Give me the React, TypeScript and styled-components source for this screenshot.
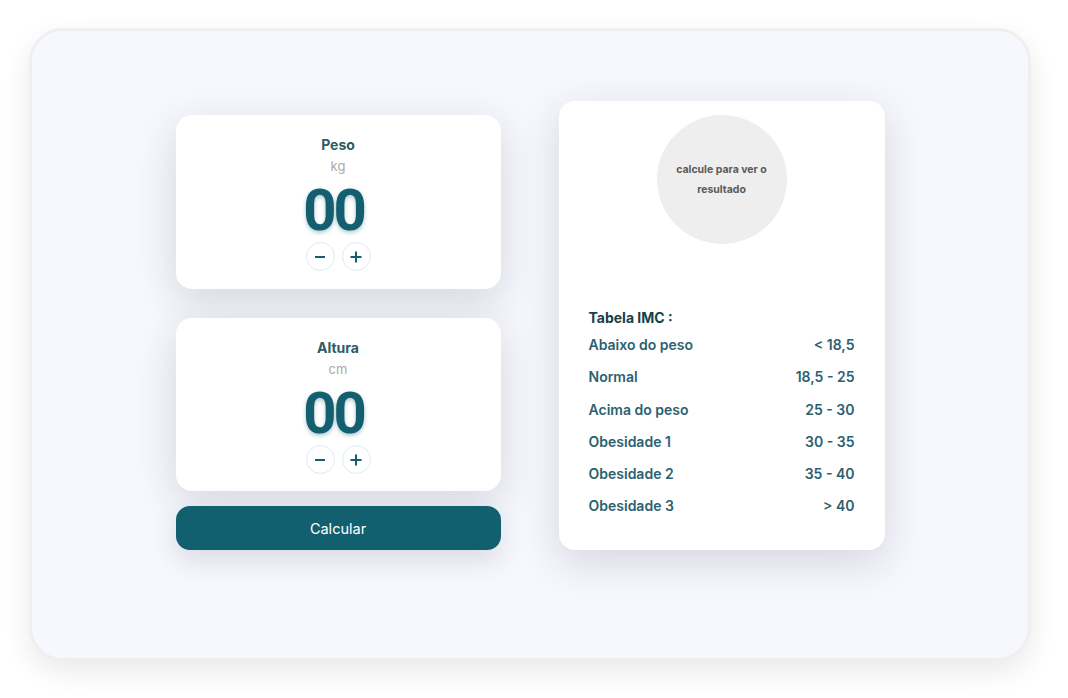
import React from "react";
import styled, { createGlobalStyle } from "styled-components";

const Global = createGlobalStyle`
  html, body { margin: 0; padding: 0; background: #ffffff; }
  body { font-family: Inter, "Noto Sans", sans-serif; }
  * { box-sizing: border-box; }
`;

const Page = styled.div`
  width: 1068px;
  height: 698px;
  padding: 28px 37px 38px 29px;
`;

const Shell = styled.main`
  width: 1002px;
  height: 633px;
  border-radius: 34px;
  background: #f7f8fd;
  border: 3px solid #efefef;
  box-shadow: 0 10px 28px rgba(0, 0, 0, 0.09);
  display: flex;
  justify-content: center;
  align-items: flex-end;
  gap: 58px;
  padding: 69px 0 108px 0;
`;

const Column = styled.section`
  width: 325px;
  display: flex;
  flex-direction: column;
`;

const InputCard = styled.div<{ $gapAfter: number }>`
  background: #ffffff;
  border-radius: 16px;
  height: ${(p) => (p.$gapAfter > 20 ? 174 : 173)}px;
  margin-bottom: ${(p) => p.$gapAfter}px;
  box-shadow: 0 12px 40px rgba(40, 40, 70, 0.16);
  display: flex;
  flex-direction: column;
  align-items: center;
  padding-top: 21px;
`;

const Title = styled.div`
  font-size: 14px;
  line-height: 17px;
  font-weight: 700;
  color: #2e5b69;
`;

const Unit = styled.div`
  font-size: 13px;
  line-height: 17px;
  color: #a9a9a9;
  margin-top: 5px;
`;

const Value = styled.div`
  font-family: Roboto, "Noto Sans", sans-serif;
  font-size: 58px;
  line-height: 60px;
  font-weight: 700;
  letter-spacing: -3px;
  color: #135f6f;
  text-shadow: 0 2px 4px rgba(19, 95, 111, 0.35);
  margin: 5px 9px 0 0;
`;

const Controls = styled.div`
  display: flex;
  gap: 7px;
  margin-top: 2px;
`;

const RoundButton = styled.button`
  width: 29px;
  height: 29px;
  border-radius: 50%;
  border: 1px solid #dcebed;
  background: #ffffff;
  display: flex;
  align-items: center;
  justify-content: center;
  padding: 0;
  cursor: pointer;
`;

const CalcButton = styled.button`
  height: 44px;
  width: 100%;
  border: none;
  border-radius: 14px;
  background: #115f6f;
  color: #ffffff;
  font-family: Inter, "Noto Sans", sans-serif;
  font-size: 14.5px;
  box-shadow: 0 10px 26px rgba(40, 40, 70, 0.14);
  cursor: pointer;
`;

const ResultCard = styled.section`
  width: 326px;
  height: 449px;
  background: #ffffff;
  border-radius: 16px;
  box-shadow: 0 12px 40px rgba(40, 40, 70, 0.16);
  padding: 14px 30px 0 30px;
  display: flex;
  flex-direction: column;
`;

const Circle = styled.div`
  width: 130px;
  height: 129px;
  border-radius: 50%;
  background: #eeeeee;
  align-self: center;
  display: flex;
  align-items: center;
  justify-content: center;
  text-align: center;
  padding: 0 10px;
  font-size: 10.5px;
  line-height: 20px;
  font-weight: 700;
  color: #5a5a5a;
`;

const TableTitle = styled.div`
  margin-top: 65px;
  font-size: 14px;
  line-height: 17px;
  font-weight: 700;
  color: #183f49;
`;

const Row = styled.div`
  display: flex;
  justify-content: space-between;
  font-size: 14px;
  line-height: 17px;
  font-weight: 600;
  color: #2c6171;
  margin-top: 15.3px;
  &:first-of-type {
    margin-top: 10px;
  }
`;

const Minus = () => (
  <svg width="14" height="14" viewBox="0 0 14 14">
    <path d="M2 7h10" stroke="#135f6f" strokeWidth="2" strokeLinecap="butt" />
  </svg>
);

const Plus = () => (
  <svg width="14" height="14" viewBox="0 0 14 14">
    <path d="M1.5 7h11M7 1.5v11" stroke="#135f6f" strokeWidth="2" strokeLinecap="butt" />
  </svg>
);

const rows: [string, string][] = [
  ["Abaixo do peso", "< 18,5"],
  ["Normal", "18,5 - 25"],
  ["Acima do peso", "25 - 30"],
  ["Obesidade 1", "30 - 35"],
  ["Obesidade 2", "35 - 40"],
  ["Obesidade 3", "> 40"],
];

const Input = ({ title, unit, gap }: { title: string; unit: string; gap: number }) => (
  <InputCard $gapAfter={gap}>
    <Title>{title}</Title>
    <Unit>{unit}</Unit>
    <Value>00</Value>
    <Controls>
      <RoundButton aria-label="diminuir">
        <Minus />
      </RoundButton>
      <RoundButton aria-label="aumentar">
        <Plus />
      </RoundButton>
    </Controls>
  </InputCard>
);

export default function App() {
  return (
    <>
      <Global />
      <Page>
        <Shell>
          <Column>
            <Input title="Peso" unit="kg" gap={29} />
            <Input title="Altura" unit="cm" gap={15} />
            <CalcButton>Calcular</CalcButton>
          </Column>
          <ResultCard>
            <Circle>calcule para ver o resultado</Circle>
            <TableTitle>Tabela IMC :</TableTitle>
            <div>
              {rows.map(([label, value]) => (
                <Row key={label}>
                  <span>{label}</span>
                  <span>{value}</span>
                </Row>
              ))}
            </div>
          </ResultCard>
        </Shell>
      </Page>
    </>
  );
}
